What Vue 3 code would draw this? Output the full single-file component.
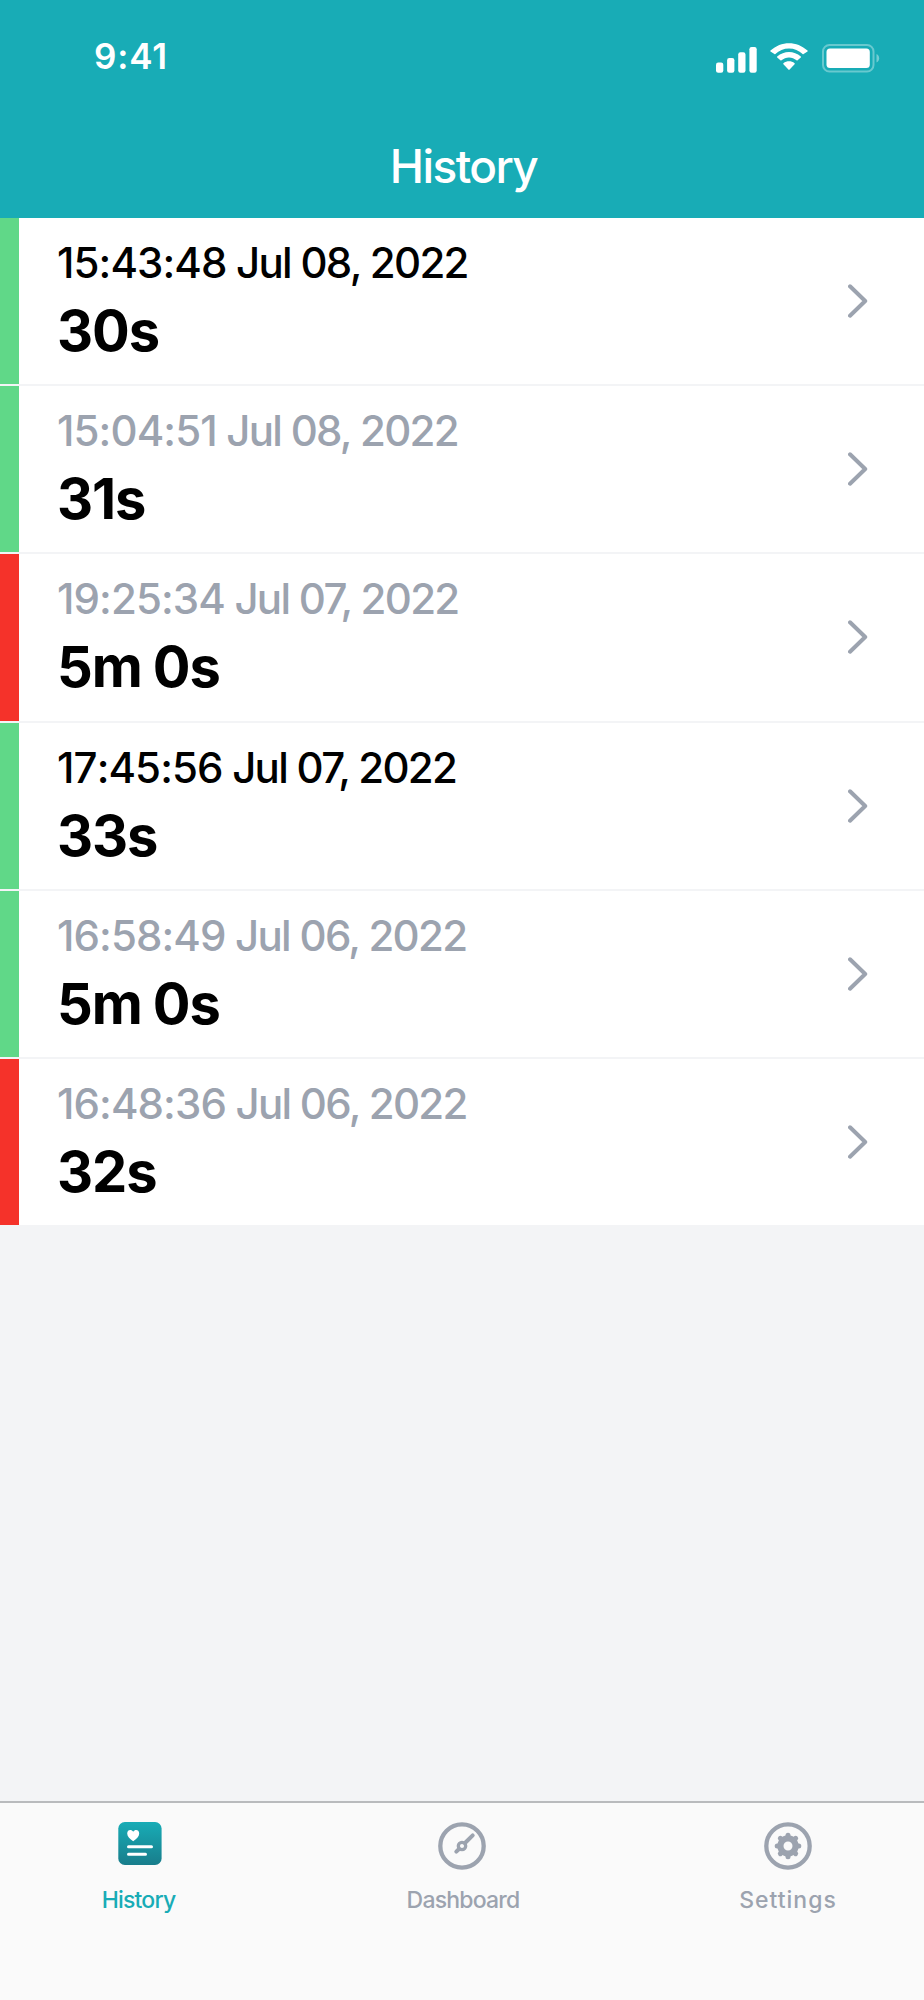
<template>
    <div class="screen">
        <header class="header">
            <div class="status-bar">
                <span class="time">9:41</span>
                <div class="status-icons">
                    <svg class="signal" width="42" height="26" viewBox="0 0 42 26" fill="#fff">
                        <rect x="0" y="15.6" width="7.3" height="10.1" rx="2.2" />
                        <rect x="11.1" y="11" width="7.3" height="14.7" rx="2.2" />
                        <rect x="22.2" y="5.3" width="7.3" height="20.4" rx="2.2" />
                        <rect x="33.4" y="0" width="7.3" height="25.7" rx="2.2" />
                    </svg>
                    <svg class="wifi" width="38" height="28" viewBox="0 0 38 28" fill="#fff">
                        <path d="M19 5.6c5.2 0 10 2 13.6 5.5.3.3.7.3 1 0l3.9-2.5c.4-.4.3-.7 0-1C27-2.3 11-2.3.5 7.600c-.3.3-.4.6 0 1l3.9 2.5c.3.3.7.3 1 0C9 7.6 13.8 5.6 19 5.6z" />
                        <path d="M19 14.4c2.8 0 5.4 1 7.500 2.900.4.3.8.3 1.100 0l3.200-2.700c.3-.3.3-.7 0-1-6.700-6.100-16.900-6.100-23.600 0-.3.300-.3.700 0 1l3.200 2.700c.3.300.7.300 1.100 0 2.100-1.900 4.700-2.900 7.500-2.900z" />
                        <path d="M24.6 21.3c.3-.3.3-.7 0-1-3.3-2.6-7.9-2.6-11.2 0-.3.3-.3.7 0 1l5 5.3c.4.4.8.4 1.2 0z" />
                    </svg>
                    <svg class="battery" width="58" height="30" viewBox="0 0 58 30">
                        <rect x="1" y="1" width="50.5" height="26.5" rx="6.5" fill="none" stroke="#fff" stroke-opacity=".35" stroke-width="2" />
                        <rect x="4.5" y="4.5" width="43.3" height="19.5" rx="3.5" fill="#fff" />
                        <path d="M54.5 10v8.6c3.6-1.5 3.6-7.1 0-8.6z" fill="#fff" fill-opacity=".4" />
                    </svg>
                </div>
            </div>
            <h1 class="title">History</h1>
        </header>

        <main class="list">
            <div v-for="item in items" :key="item.time" class="row">
                <div class="marker" :class="item.status"></div>
                <div class="info">
                    <div class="date" :class="{ read: item.read }">
                        <span class="clock">{{ item.time }}</span> {{ item.day }}
                    </div>
                    <div class="duration">{{ item.duration }}</div>
                </div>
                <svg class="chevron" width="20" height="34" viewBox="0 0 20 34">
                    <path d="M2 2.3 17.2 17 2 31.7" fill="none" stroke="#9ca3af" stroke-width="4" stroke-linecap="round" stroke-linejoin="round" />
                </svg>
            </div>
        </main>

        <nav class="tab-bar">
            <div class="tab active">
                <svg width="44" height="48" viewBox="0 0 44 48">
                    <defs>
                        <linearGradient id="history-fill" x1="0" y1="0" x2="0" y2="1">
                            <stop offset="0" stop-color="#18acb6" />
                            <stop offset="1" stop-color="#187d8b" />
                        </linearGradient>
                    </defs>
                    <rect x="0.3" y="0" width="43.3" height="43" rx="6.5" fill="url(#history-fill)" />
                    <path d="M15.2 19.3c-3.2-2.5-6-4.9-6-7.9 0-4 4.4-4.3 6-1.7 1.6-2.6 6-2.3 6 1.7 0 3-2.8 5.4-6 7.9z" fill="#fff" />
                    <path d="M10.5 24.8H33.5M10.5 32.3H27.5" stroke="#fff" stroke-width="3" stroke-linecap="round" />
                </svg>
                <span class="label label-history">History</span>
            </div>
            <div class="tab tab-dashboard">
                <svg width="48" height="48" viewBox="0 0 48 48" fill="none" stroke="#9ca3af" stroke-linecap="round">
                    <circle cx="24" cy="24" r="21.7" stroke-width="4.3" />
                    <circle cx="24" cy="24" r="3.7" stroke-width="3.3" />
                    <path d="M27 21 34.7 13.3M21 27 18.3 29.7" stroke-width="4" />
                </svg>
                <span class="label label-dashboard">Dashboard</span>
            </div>
            <div class="tab">
                <svg width="48" height="48" viewBox="0 0 48 48" fill="none" stroke="#9ca3af">
                    <circle cx="24" cy="24" r="21.7" stroke-width="4.3" />
                    <circle cx="24" cy="24" r="7.6" stroke-width="6.2" />
                    <path v-for="n in 8" :key="n" d="M24 15V13.2" stroke-width="5" stroke-linejoin="round" stroke-linecap="round" :transform="`rotate(${n * 45} 24 24)`" />
                </svg>
                <span class="label label-settings">Settings</span>
            </div>
        </nav>
    </div>
</template>

<script setup>

import { ref } from 'vue';

const items = ref([
    { time: '15:43:48', day: 'Jul 08, 2022', duration: '30s', status: 'success', read: false },
    { time: '15:04:51', day: 'Jul 08, 2022', duration: '31s', status: 'success', read: true },
    { time: '19:25:34', day: 'Jul 07, 2022', duration: '5m 0s', status: 'danger', read: true },
    { time: '17:45:56', day: 'Jul 07, 2022', duration: '33s', status: 'success', read: false },
    { time: '16:58:49', day: 'Jul 06, 2022', duration: '5m 0s', status: 'success', read: true },
    { time: '16:48:36', day: 'Jul 06, 2022', duration: '32s', status: 'danger', read: true }
])

</script>

<style>
body {
    margin: 0;
    background-color: #f3f4f6;
}
</style>

<style scoped>
.screen {
    display: flex;
    flex-direction: column;
    width: 924px;
    height: 2000px;
    overflow: hidden;
    background-color: #f3f4f6;
    font-family: Inter, "Liberation Sans", sans-serif;
}

.header {
    height: 218px;
    flex-shrink: 0;
    background-color: #18acb6;
    color: #fff;
}

.status-bar {
    display: flex;
    justify-content: space-between;
    height: 116px;
    padding: 0 44px 0 94px;
    box-sizing: border-box;
}

.time {
    padding-top: 35px;
    font-size: 35px;
    line-height: 42px;
    font-weight: 600;
    letter-spacing: 0.8px;
}

.status-icons {
    display: flex;
    align-items: flex-start;
    padding-top: 43px;
}

.signal {
    margin: 4px 12px 0 0;
}

.wifi {
    margin-right: 14px;
}

.battery {
    margin-top: 1px;
}

.title {
    margin: 0;
    padding-left: 3px;
    text-align: center;
    font-size: 46px;
    line-height: 100px;
    font-weight: 450;
    letter-spacing: -1.6px;
}

.list {
    flex: 1;
}

.row {
    display: flex;
    align-items: center;
    height: 168.2px;
    box-sizing: border-box;
    border-bottom: 2px solid #f3f4f6;
    background-color: #fff;
}

.marker {
    align-self: stretch;
    width: 19px;
}

.success {
    background-color: #60d888;
}

.danger {
    background-color: #f5322a;
}

.info {
    flex: 1;
    align-self: stretch;
    padding: 17px 0 0 38px;
}

.date {
    font-size: 42px;
    line-height: 56px;
    font-weight: 450;
    letter-spacing: -1.7px;
    color: #000;
}

.date.read {
    color: #9ca3af;
}

.clock {
    font-kerning: none;
    letter-spacing: -0.9px;
}

.duration {
    margin-top: 6px;
    font-size: 56px;
    line-height: 68px;
    font-weight: 700;
    font-kerning: none;
    letter-spacing: -1.1px;
    word-spacing: -1px;
}

.chevron {
    margin-right: 56px;
}

.tab-bar {
    display: flex;
    justify-content: space-between;
    height: 199px;
    flex-shrink: 0;
    padding: 19px 76px 0 80px;
    box-sizing: border-box;
    border-top: 2px solid #b9bbbd;
    background-color: #fafafa;
}

.tab {
    display: flex;
    flex-direction: column;
    align-items: center;
    width: 120px;
    color: #9ca3af;
}

.tab.active {
    color: #18acb6;
}

.tab-dashboard {
    margin-right: 4px;
}

.label {
    margin-top: 16px;
    font-size: 23px;
    line-height: 28px;
    font-weight: 500;
    letter-spacing: -0.8px;
}

.label-history {
    padding-right: 3px;
}

.label-dashboard {
    padding-left: 2px;
}

.label-settings {
    letter-spacing: 1px;
}
</style>
